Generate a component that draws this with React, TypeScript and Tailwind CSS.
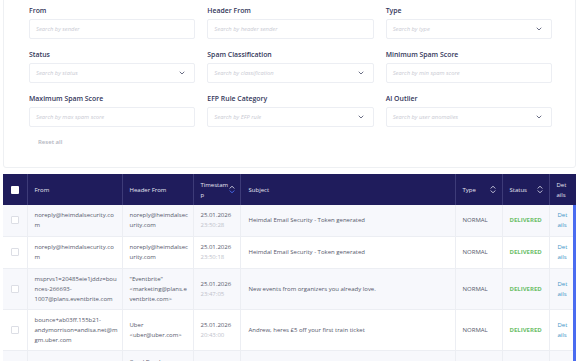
import React from "react";

const font = { fontFamily: '"Open Sans", "Noto Sans", sans-serif' };

function Chevron() {
  return (
    <svg width="6" height="4" viewBox="0 0 6 4" className="shrink-0">
      <path d="M1 1 L3 3 L5 1" fill="none" stroke="#6b6f86" strokeWidth="1" strokeLinecap="round" strokeLinejoin="round" />
    </svg>
  );
}

function SortIcon({ active }: { active?: boolean }) {
  return (
    <svg width="6" height="9" viewBox="0 0 6 9" className="shrink-0">
      <path d="M1 3.2 L3 1.2 L5 3.2" fill="none" stroke="#d8d8e6" strokeWidth="0.9" strokeLinecap="round" strokeLinejoin="round" />
      <path d="M1 5.8 L3 7.8 L5 5.8" fill="none" stroke={active ? "#4d74ff" : "#d8d8e6"} strokeWidth="0.9" strokeLinecap="round" strokeLinejoin="round" />
    </svg>
  );
}

function Field({ label, placeholder, select }: { label: string; placeholder: string; select?: boolean }) {
  return (
    <div className="flex flex-col">
      <div className="h-[10px] leading-[10px] text-[6.9px] font-semibold text-[#33365a] mb-[3px]">{label}</div>
      <div className="h-[20px] rounded-[2px] border border-[#eceef3] bg-white flex items-center justify-between pl-[6px] pr-[9px]">
        <span className="text-[5.8px] italic text-[#c9cad3]">{placeholder}</span>
        {select && <Chevron />}
      </div>
    </div>
  );
}

type Row = {
  from: string[];
  header: string[];
  date: string;
  time: string;
  subject: string;
  h: number;
  light: boolean;
};

const rows: Row[] = [
  { from: ["noreply@heimdalsecurity.co", "m"], header: ["noreply@heimdalsec", "urity.com"], date: "25.01.2026", time: "23:50:28", subject: "Heimdal Email Security - Token generated", h: 31, light: true },
  { from: ["noreply@heimdalsecurity.co", "m"], header: ["noreply@heimdalsec", "urity.com"], date: "25.01.2026", time: "23:50:18", subject: "Heimdal Email Security - Token generated", h: 32, light: false },
  { from: ["msprvs1=20485eie1jddz=bou", "nces-266693-", "1007@plans.eventbrite.com"], header: ["\"Eventbrite\"", "<marketing@plans.e", "ventbrite.com>"], date: "25.01.2026", time: "23:47:05", subject: "New events from organizers you already love.", h: 41, light: true },
  { from: ["bounce+ab03ff.155b21-", "andymorrison=andisa.net@m", "gm.uber.com"], header: ["Uber", "<uber@uber.com>"], date: "25.01.2026", time: "20:43:00", subject: "Andrew, heres £5 off your first train ticket", h: 41, light: false },
  { from: [""], header: ["Carol Burah"], date: "", time: "", subject: "", h: 41, light: true },
];

const cols = [24, 95, 71, 47, 215, 47, 47, 27];

export default function App() {
  return (
    <div style={font} className="w-[579px] h-[361px] overflow-hidden bg-white relative">
      {/* Filter card */}
      <div className="ml-[3px] w-[573px] -mt-px border border-[#eef0f3] rounded-b-[3px] bg-white pt-[6px] pl-[25px] pr-[23px] pb-[20px]">
        <div className="grid grid-cols-3 gap-x-[12px] gap-y-[11px]">
          <Field label="From" placeholder="Search by sender" />
          <Field label="Header From" placeholder="Search by header sender" />
          <Field label="Type" placeholder="Search by type" select />
          <Field label="Status" placeholder="Search by status" select />
          <Field label="Spam Classification" placeholder="Search by classification" select />
          <Field label="Minimum Spam Score" placeholder="Search by min spam score" />
          <Field label="Maximum Spam Score" placeholder="Search by max spam score" />
          <Field label="EFP Rule Category" placeholder="Search by EFP rule" select />
          <Field label="AI Outlier" placeholder="Search by user anomalies" select />
        </div>
        <div className="mt-[10px] pl-[9px] h-[10px] leading-[10px] text-[6px] font-semibold text-[#b3b5c0]">Reset all</div>
      </div>

      {/* Table */}
      <div className="ml-[3px] mt-[6px] w-[573px] relative">
        <table className="border-collapse table-fixed w-[573px]">
          <colgroup>
            {cols.map((w, i) => (
              <col key={i} style={{ width: w }} />
            ))}
          </colgroup>
          <thead>
            <tr className="h-[31px] bg-[#1f1c5c] text-[6px] text-[#e6e6f2] leading-[10px]">
              <th className="border-r border-[#3d3b78] p-0">
                <div className="flex justify-center">
                  <div className="w-[8px] h-[8px] bg-white rounded-[1px]" />
                </div>
              </th>
              <th className="border-r border-[#3d3b78] px-[7px] text-left font-normal">From</th>
              <th className="border-r border-[#3d3b78] px-[7px] text-left font-normal">Header From</th>
              <th className="border-r border-[#3d3b78] pl-[7px] pr-[5px] text-left font-normal">
                <div className="flex items-center justify-between">
                  <span>Timestam<br />p</span>
                  <SortIcon active />
                </div>
              </th>
              <th className="border-r border-[#3d3b78] px-[8px] text-left font-normal">Subject</th>
              <th className="border-r border-[#3d3b78] pl-[7px] pr-[6px] text-left font-normal">
                <div className="flex items-center justify-between">
                  <span>Type</span>
                  <SortIcon />
                </div>
              </th>
              <th className="border-r border-[#3d3b78] pl-[7px] pr-[6px] text-left font-normal">
                <div className="flex items-center justify-between">
                  <span>Status</span>
                  <SortIcon />
                </div>
              </th>
              <th className="px-[7px] text-left font-normal">Det<br />ails</th>
            </tr>
          </thead>
          <tbody className="text-[6px] leading-[10px] text-[#55586b]">
            {rows.map((r, i) => (
              <tr key={i} style={{ height: r.h }} className={r.light ? "bg-[#f7f8fc]" : "bg-white"}>
                <td className="border-r border-b border-[#eceef3] p-0">
                  {r.date && (
                    <div className="flex justify-center">
                      <div className="w-[8px] h-[8px] border border-[#dcdee5] rounded-[1px] bg-white" />
                    </div>
                  )}
                </td>
                <td className="border-r border-b border-[#eceef3] px-[7px] align-middle">
                  {r.from.map((l, j) => (
                    <div key={j}>{l}</div>
                  ))}
                </td>
                <td className={`border-r border-b border-[#eceef3] px-[7px] ${r.date ? "align-middle" : "align-top pt-[6px]"}`}>
                  {r.header.map((l, j) => (
                    <div key={j}>{l}</div>
                  ))}
                </td>
                <td className="border-r border-b border-[#eceef3] px-[7px]">
                  <div>{r.date}</div>
                  <div className="text-[#c0c2cb]">{r.time}</div>
                </td>
                <td className="border-r border-b border-[#eceef3] px-[8px]">{r.subject}</td>
                <td className="border-r border-b border-[#eceef3] px-[7px]">{r.date && "NORMAL"}</td>
                <td className="border-r border-b border-[#eceef3] px-[7px] font-bold text-[#6cc06a]">{r.date && "DELIVERED"}</td>
                <td className="border-b border-[#eceef3] px-[8px] text-[#3d94c6]">
                  {r.date && (
                    <>
                      <div>Det</div>
                      <div>ails</div>
                    </>
                  )}
                </td>
              </tr>
            ))}
          </tbody>
        </table>
        <div className="absolute right-0 top-[31px] w-[3px] h-[200px] bg-[#4a6cf0]" />
      </div>
    </div>
  );
}
